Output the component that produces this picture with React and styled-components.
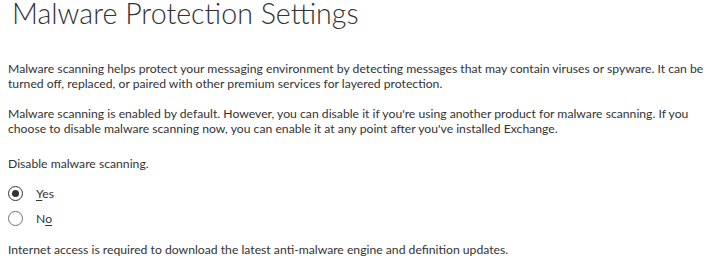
import React from "react";
import styled, { createGlobalStyle } from "styled-components";

const GlobalStyle = createGlobalStyle`
  html, body { margin: 0; padding: 0; background: #ffffff; }
  body { font-family: "Lato", "Open Sans", sans-serif; color: #333333; }
`;

const Page = styled.main`
  width: 720px;
  height: 262px;
  box-sizing: border-box;
  overflow: hidden;
`;

const Title = styled.h1`
  margin: 0;
  padding-left: 12px;
  font-family: "Lato", "Open Sans", sans-serif;
  font-weight: 300;
  font-size: 28.6px;
  line-height: 27px;
  color: #333333;
  white-space: nowrap;
`;

const Body = styled.section`
  padding: 0 8px;
  font-size: 12.2px;
  line-height: 15px;
`;

const Para = styled.p`
  margin: ${(p) => p.$top}px 0 0;
  white-space: nowrap;
`;

const RadioGroup = styled.div`
  margin-top: ${(p) => p.$top}px;
  display: flex;
  flex-direction: column;
`;

const RadioRow = styled.label`
  height: 25px;
  display: flex;
  align-items: center;
  gap: 13px;
  cursor: default;
`;

const RadioCircle = styled.span`
  box-sizing: border-box;
  width: 15px;
  height: 15px;
  border-radius: 50%;
  border: 1px solid ${(p) => (p.$checked ? "#333333" : "#6f6f6f")};
  display: flex;
  align-items: center;
  justify-content: center;
  background: #ffffff;
  &::after {
    content: "";
    width: 7px;
    height: 7px;
    border-radius: 50%;
    background: ${(p) => (p.$checked ? "#333333" : "transparent")};
  }
`;

const Key = styled.span`
  text-decoration: underline;
  text-underline-offset: 2px;
`;

export default function App() {
  return (
    <>
      <GlobalStyle />
      <Page>
        <Title>Malware Protection Settings</Title>
        <Body>
          <Para $top={34}>
            Malware scanning helps protect your messaging environment by detecting messages that may contain viruses or spyware. It can be
            <br />
            turned off, replaced, or paired with other premium services for layered protection.
          </Para>
          <Para $top={15}>
            Malware scanning is enabled by default. However, you can disable it if you're using another product for malware scanning. If you
            <br />
            choose to disable malware scanning now, you can enable it at any point after you've installed Exchange.
          </Para>
          <Para $top={20}>Disable malware scanning.</Para>
          <RadioGroup $top={10} role="radiogroup">
            <RadioRow>
              <RadioCircle $checked />
              <span>
                <Key>Y</Key>es
              </span>
            </RadioRow>
            <RadioRow>
              <RadioCircle />
              <span>
                N<Key>o</Key>
              </span>
            </RadioRow>
          </RadioGroup>
          <Para $top={11}>
            Internet access is required to download the latest anti-malware engine and definition updates.
          </Para>
        </Body>
      </Page>
    </>
  );
}
